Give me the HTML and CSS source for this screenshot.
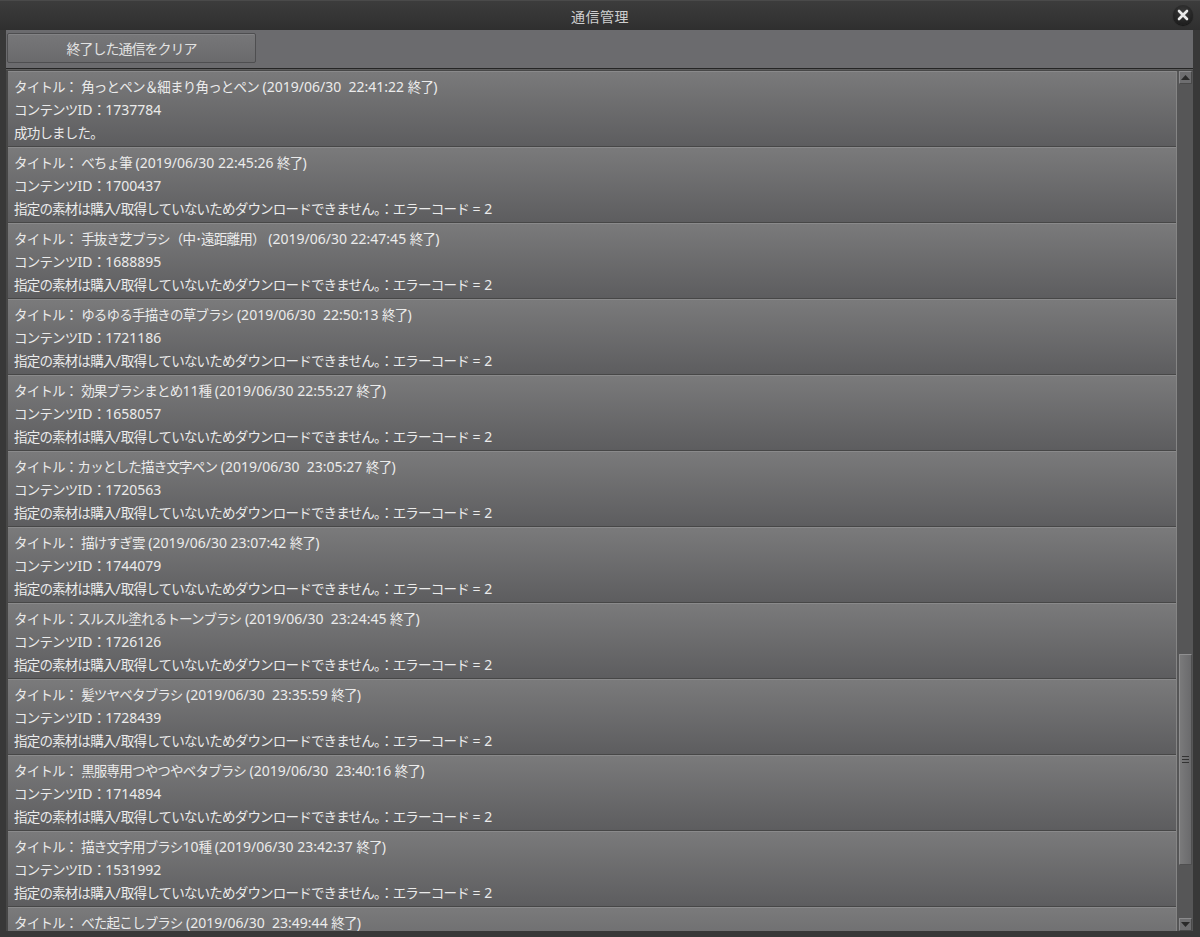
FILE: index.html
```html
<!DOCTYPE html>
<html lang="ja">
<head>
<meta charset="utf-8">
<title>通信管理</title>
<link rel="stylesheet" href="styles.css">
</head>
<body>
<div class="window">
  <div class="titlebar">
    <span class="title">通信管理</span>
    <span class="close"><svg width="20" height="20" viewBox="0 0 20 20"><path d="M6 6 L14 14 M14 6 L6 14" stroke="#e8e8e8" stroke-width="2.6" stroke-linecap="round"/></svg></span>
  </div>
  <div class="body">
    <div class="toolbar">
      <button class="btn">終了した通信をクリア</button>
    </div>
    <div class="listwrap">
      <div class="list">
        <div class="item"><div class="ln">タイトル：<span class="n"> </span>角っとペン＆細まり角っとペン<span class="n"> (2019/06/30  22:41:22 </span>終了<span class="n">)</span></div><div class="ln">コンテンツ<span class="n">ID</span>：<span class="n">1737784</span></div><div class="ln">成功しました。</div></div>
        <div class="item"><div class="ln">タイトル：<span class="n"> </span>べちょ筆<span class="n"> (2019/06/30 22:45:26 </span>終了<span class="n">)</span></div><div class="ln">コンテンツ<span class="n">ID</span>：<span class="n">1700437</span></div><div class="ln">指定の素材は購入<span class="n">/</span>取得していないためダウンロードできません。：エラーコード<span class="n"> = 2</span></div></div>
        <div class="item"><div class="ln">タイトル：<span class="n"> </span>手抜き芝ブラシ（中･遠距離用）<span class="n"> (2019/06/30 22:47:45 </span>終了<span class="n">)</span></div><div class="ln">コンテンツ<span class="n">ID</span>：<span class="n">1688895</span></div><div class="ln">指定の素材は購入<span class="n">/</span>取得していないためダウンロードできません。：エラーコード<span class="n"> = 2</span></div></div>
        <div class="item"><div class="ln">タイトル：<span class="n"> </span>ゆるゆる手描きの草ブラシ<span class="n"> (2019/06/30  22:50:13 </span>終了<span class="n">)</span></div><div class="ln">コンテンツ<span class="n">ID</span>：<span class="n">1721186</span></div><div class="ln">指定の素材は購入<span class="n">/</span>取得していないためダウンロードできません。：エラーコード<span class="n"> = 2</span></div></div>
        <div class="item"><div class="ln">タイトル：<span class="n"> </span>効果ブラシまとめ<span class="n">11</span>種<span class="n"> (2019/06/30 22:55:27 </span>終了<span class="n">)</span></div><div class="ln">コンテンツ<span class="n">ID</span>：<span class="n">1658057</span></div><div class="ln">指定の素材は購入<span class="n">/</span>取得していないためダウンロードできません。：エラーコード<span class="n"> = 2</span></div></div>
        <div class="item"><div class="ln">タイトル：カッとした描き文字ペン<span class="n"> (2019/06/30  23:05:27 </span>終了<span class="n">)</span></div><div class="ln">コンテンツ<span class="n">ID</span>：<span class="n">1720563</span></div><div class="ln">指定の素材は購入<span class="n">/</span>取得していないためダウンロードできません。：エラーコード<span class="n"> = 2</span></div></div>
        <div class="item"><div class="ln">タイトル：<span class="n"> </span>描けすぎ雲<span class="n"> (2019/06/30 23:07:42 </span>終了<span class="n">)</span></div><div class="ln">コンテンツ<span class="n">ID</span>：<span class="n">1744079</span></div><div class="ln">指定の素材は購入<span class="n">/</span>取得していないためダウンロードできません。：エラーコード<span class="n"> = 2</span></div></div>
        <div class="item"><div class="ln">タイトル：スルスル塗れるトーンブラシ<span class="n"> (2019/06/30  23:24:45 </span>終了<span class="n">)</span></div><div class="ln">コンテンツ<span class="n">ID</span>：<span class="n">1726126</span></div><div class="ln">指定の素材は購入<span class="n">/</span>取得していないためダウンロードできません。：エラーコード<span class="n"> = 2</span></div></div>
        <div class="item"><div class="ln">タイトル：<span class="n"> </span>髪ツヤベタブラシ<span class="n"> (2019/06/30  23:35:59 </span>終了<span class="n">)</span></div><div class="ln">コンテンツ<span class="n">ID</span>：<span class="n">1728439</span></div><div class="ln">指定の素材は購入<span class="n">/</span>取得していないためダウンロードできません。：エラーコード<span class="n"> = 2</span></div></div>
        <div class="item"><div class="ln">タイトル：<span class="n"> </span>黒服専用つやつやベタブラシ<span class="n"> (2019/06/30  23:40:16 </span>終了<span class="n">)</span></div><div class="ln">コンテンツ<span class="n">ID</span>：<span class="n">1714894</span></div><div class="ln">指定の素材は購入<span class="n">/</span>取得していないためダウンロードできません。：エラーコード<span class="n"> = 2</span></div></div>
        <div class="item"><div class="ln">タイトル：<span class="n"> </span>描き文字用ブラシ<span class="n">10</span>種<span class="n"> (2019/06/30 23:42:37 </span>終了<span class="n">)</span></div><div class="ln">コンテンツ<span class="n">ID</span>：<span class="n">1531992</span></div><div class="ln">指定の素材は購入<span class="n">/</span>取得していないためダウンロードできません。：エラーコード<span class="n"> = 2</span></div></div>
        <div class="item"><div class="ln">タイトル：<span class="n"> </span>べた起こしブラシ<span class="n"> (2019/06/30  23:49:44 </span>終了<span class="n">)</span></div></div>
      </div>
      <div class="scrollbar">
        <div class="sbtn"><svg width="9" height="5" viewBox="0 0 9 5"><path d="M4.5 0 L9 5 L0 5 Z" fill="#2a2a2a"/></svg></div>
        <div class="track">
          <div class="thumb"><svg width="7" height="9" viewBox="0 0 7 9"><path d="M0 1.5 H7 M0 4.5 H7 M0 7.5 H7" stroke="#333" stroke-width="1"/></svg></div>
        </div>
        <div class="sbtn"><svg width="9" height="5" viewBox="0 0 9 5"><path d="M0 0 L9 0 L4.5 5 Z" fill="#2a2a2a"/></svg></div>
      </div>
    </div>
  </div>
</div>
</body>
</html>
```

FILE: styles.css
```css
* { box-sizing: border-box; }
html, body { margin: 0; padding: 0; }
body {
  background: #3a3a3a;
  font-family: "Noto Sans CJK JP", "Noto Sans", sans-serif;
  overflow: hidden;
}
.window {
  width: 1200px;
  height: 937px;
  display: flex;
  flex-direction: column;
  background: #383838;
}
.titlebar {
  height: 30px;
  flex: none;
  display: flex;
  align-items: center;
  justify-content: center;
  position: relative;
  background: linear-gradient(#3c3c3c, #2f2f2f);
  border-top: 1px solid #4a4a4a;
}
.title {
  color: #cfcfcf;
  font-size: 14px;
  letter-spacing: 0.5px;
}
.close {
  position: absolute;
  right: 7px;
  top: 4px;
  width: 20px;
  height: 20px;
  border-radius: 50%;
  background: radial-gradient(circle at 50% 35%, #3a3a3a, #151515);
  box-shadow: 0 1px 1px rgba(0,0,0,0.6);
  display: flex;
}
.body {
  flex: 1;
  display: flex;
  flex-direction: column;
  padding: 0 7px 6px 6px;
  min-height: 0;
}
.toolbar {
  height: 39px;
  flex: none;
  background: #6b6b6e;
  padding: 3px 0 0 1px;
  border-bottom: 1px solid #252525;
}
.btn {
  width: 249px;
  height: 30px;
  font-family: inherit;
  font-size: 14px;
  color: #e2e2e2;
  background: linear-gradient(#777779, #6a6a6c);
  border: 1px solid #4e4e50;
  border-radius: 2px;
  box-shadow: inset 0 1px 0 #838385;
  padding: 0;
  letter-spacing: -1px;
}
.listwrap {
  flex: 1;
  min-height: 0;
  display: flex;
  background: #474747;
  border-top: 1px solid #5c5c5c;
  padding: 1px 0 0 2px;
}
.list {
  flex: 1;
  min-width: 0;
  overflow: hidden;
  display: flex;
  flex-direction: column;
  gap: 1px;
  border-right: 1px solid #858585;
}
.item {
  flex: none;
  height: 75px;
  padding: 3px 0 0 6px;
  background: linear-gradient(#7a7a7b, #5d5d5f);
  border-top: 1px solid #8a8a8b;
  color: #ebebeb;
  font-size: 13.5px;
  letter-spacing: -0.8px;
}
.ln {
  height: 23px;
  line-height: 23px;
  white-space: pre;
}
.n {
  font-family: "Noto Sans", sans-serif;
  font-size: 14px;
  letter-spacing: 0;
}
.scrollbar {
  width: 16px;
  flex: none;
  display: flex;
  flex-direction: column;
  padding: 0 1px 0 2px;
  background: #565657;
}
.sbtn {
  flex: none;
  height: 13px;
  display: flex;
  align-items: center;
  justify-content: center;
  background: #6e6e70;
  border: 1px solid #8a8a8c;
  border-color: #8a8a8c #4a4a4a #4a4a4a #8a8a8c;
}
.track {
  flex: 1;
  display: flex;
  flex-direction: column;
  justify-content: flex-end;
  padding-bottom: 53px;
}
.thumb {
  height: 211px;
  background: linear-gradient(90deg, #7a7a7b, #6a6a6c);
  border: 1px solid #8a8a8b;
  border-color: #8f8f90 #4f4f50 #4f4f50 #8f8f90;
  display: flex;
  align-items: center;
  justify-content: center;
}
```
